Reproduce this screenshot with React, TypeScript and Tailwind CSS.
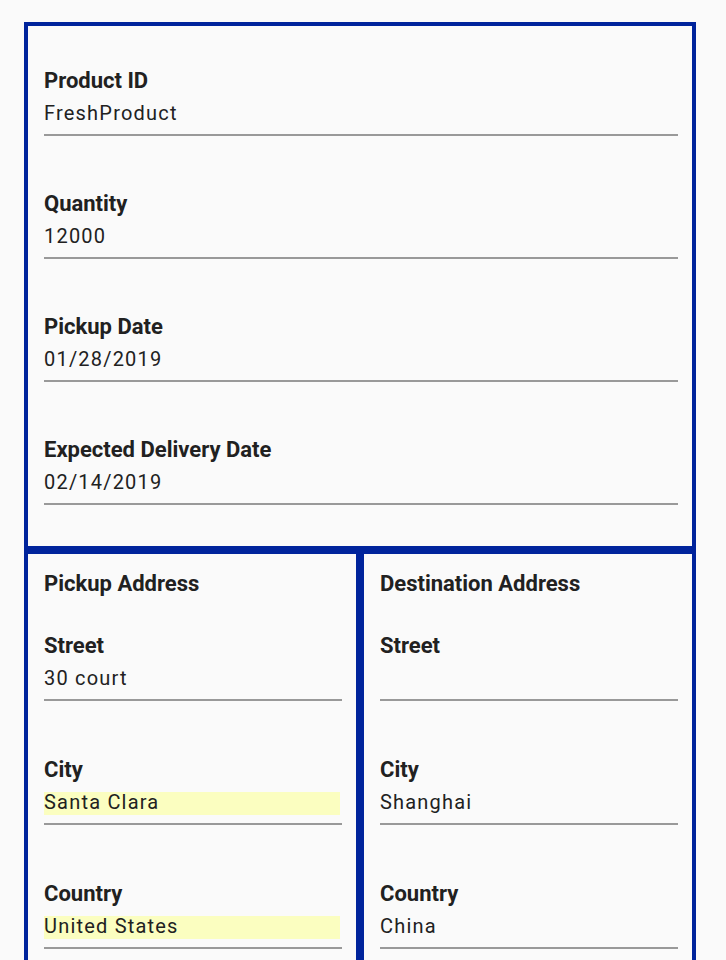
import React from "react";

type FieldProps = { label: string; value: string; highlight?: boolean; first?: boolean; gap: string };

function Field({ label, value, highlight, first, gap }: FieldProps) {
  return (
    <div className={first ? "" : gap}>
      <div className="text-[22px] font-bold leading-[26px] text-[#212121]">{label}</div>
      <div
        className={
          "mt-[9px] h-[23px] text-[20px] leading-[20px] tracking-[1.2px] text-[#212121] " +
          (highlight ? "mr-[2px] bg-[#fbfec0]" : "")
        }
      >
        {value}
      </div>
      <div className="mt-[8px] h-[2px] bg-[#999999]" />
    </div>
  );
}

export default function App() {
  return (
    <div
      className="min-h-[960px] bg-[#fafafa] pl-[24px] pr-[30px] pt-[22px] pb-[40px]"
      style={{ fontFamily: "Roboto, 'Liberation Sans', sans-serif" }}
    >
      <div className="border-4 border-[#00249c] pl-4 pr-[14px] pt-[42px] pb-[41px]">
        <Field first gap="mt-[55px]" label="Product ID" value="FreshProduct" />
        <Field gap="mt-[55px]" label="Quantity" value="12000" />
        <Field gap="mt-[55px]" label="Pickup Date" value="01/28/2019" />
        <Field gap="mt-[55px]" label="Expected Delivery Date" value="02/14/2019" />
      </div>
      <div className="grid grid-cols-2">
        <div className="border-4 border-[#00249c] pl-4 pr-[14px] pt-[17px] pb-[40px]">
          <div className="text-[22px] font-bold leading-[26px] text-[#212121]">Pickup Address</div>
          <div className="mt-[36px]">
            <Field first gap="mt-[56px]" label="Street" value="30 court" />
            <Field gap="mt-[56px]" label="City" value="Santa Clara" highlight />
            <Field gap="mt-[56px]" label="Country" value="United States" highlight />
          </div>
        </div>
        <div className="border-4 border-[#00249c] pl-4 pr-[14px] pt-[17px] pb-[40px]">
          <div className="text-[22px] font-bold leading-[26px] text-[#212121]">Destination Address</div>
          <div className="mt-[36px]">
            <Field first gap="mt-[56px]" label="Street" value="" />
            <Field gap="mt-[56px]" label="City" value="Shanghai" />
            <Field gap="mt-[56px]" label="Country" value="China" />
          </div>
        </div>
      </div>
    </div>
  );
}
